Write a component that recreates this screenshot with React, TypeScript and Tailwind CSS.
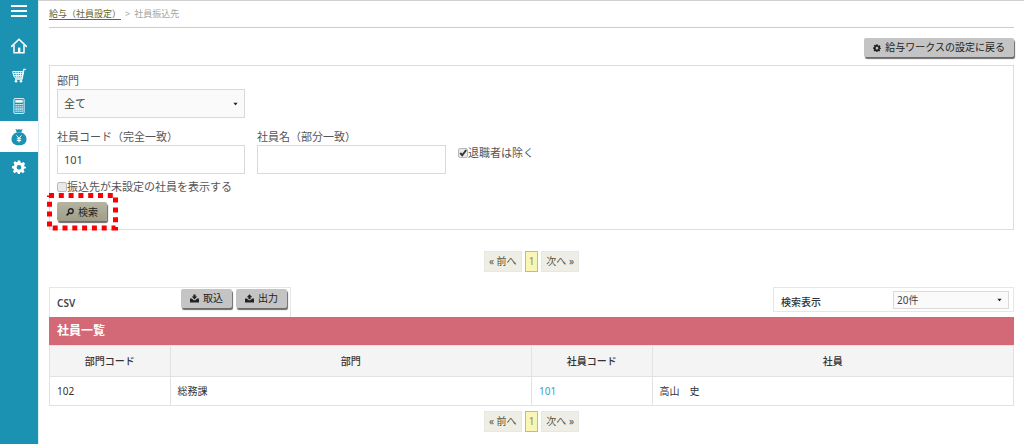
import { useState, type ReactNode } from 'react';

const NAV_LABELS = ['ホーム', '購買', '経理', '給与', '設定'] as const;

const BUTTON_SHADOW = 'shadow-[1px_2px_1px_#6b6b6b]';

function GearIcon({ className }: { className: string }) {
  return (
    <svg viewBox="0 0 24 24" className={className} fill="currentColor" fillRule="evenodd" aria-hidden="true">
      <path d="M10 1h4l.7 3.3 2 .9 2.9-1.8 2.9 2.9-1.8 2.9.9 2L24 12v2l-3.3.8-.9 2 1.8 2.9-2.8 2.8-2.9-1.8-2 .9L13.2 25h-3l-.8-3.4-2-.9-2.9 1.8-2.8-2.8 1.8-2.9-.9-2L0 14v-3.5l3.3-.8.9-2L2.4 4.8l2.8-2.8 2.9 1.8 1.3-.5zM12 8.5a4 4 0 1 0 0 8 4 4 0 0 0 0-8z" />
    </svg>
  );
}

function HomeIcon() {
  return (
    <svg viewBox="0 0 16 16" className="size-4" fill="none" stroke="currentColor" strokeWidth="1.5" aria-hidden="true">
      <path d="M.6 8.4 8 1.2l7.4 7.2" strokeLinecap="round" />
      <path d="M3 7v7.7h10V7" />
      <path d="M7 9.6h2.4v5H7z" fill="currentColor" stroke="none" />
    </svg>
  );
}

function CartIcon() {
  return (
    <svg viewBox="0 0 16 16" className="size-4" fill="none" stroke="currentColor" aria-hidden="true">
      <path d="M14.8 1.3h-1.9L11 11H4" strokeWidth="1.3" />
      <path d="M1.6 3.6h10.6l-.9 5.6H3.3z" strokeWidth="1" />
      <path d="M1.9 5.5h10M2.6 7.4h9M4.7 3.6l.8 5.6M7.2 3.6v5.6M9.8 3.6l-.6 5.6" strokeWidth=".9" />
      <circle cx="5" cy="13.3" r="1.3" fill="currentColor" stroke="none" />
      <circle cx="10" cy="13.3" r="1.3" fill="currentColor" stroke="none" />
    </svg>
  );
}

function CalculatorIcon() {
  return (
    <svg viewBox="0 0 16 16" className="size-4" fill="none" stroke="currentColor" aria-hidden="true">
      <rect x="2.9" y=".6" width="10.2" height="14.8" rx=".8" strokeWidth=".9" />
      <rect x="4.3" y="2.2" width="7.4" height="2.4" fill="currentColor" stroke="none" />
      <path d="M4.4 6.6h7.4M4.4 8.8h7.4M4.4 11h7.4M4.4 13.2h7.4" strokeWidth="1.3" strokeDasharray="1.4 .6" />
    </svg>
  );
}

function MoneyBagIcon() {
  return (
    <svg viewBox="0 0 16 18" className="h-[18px] w-4" aria-hidden="true">
      <path d="M4.4.9 6.6 1.7 8 .9l1.4.8 2.2-.8-1.4 3.5H5.8z" fill="#1c92b3" />
      <path d="M5.4 4.6h5.2c2.8 1 4.9 3.4 4.9 6.4 0 4-2.7 6.3-7.5 6.3S.5 15 .5 11c0-3 2.1-5.4 4.9-6.4z" fill="#1c92b3" />
      <path d="M5.6 7.4 8 10.4l2.4-3M8 10.4v4M5.8 10.8h4.4M5.8 12.6h4.4" fill="none" stroke="#ffffff" strokeWidth="1" />
    </svg>
  );
}

function SearchIcon() {
  return (
    <svg viewBox="0 0 10 10" className="size-2" fill="none" stroke="currentColor" aria-hidden="true">
      <circle cx="6" cy="3.9" r="3" strokeWidth="1.7" />
      <path d="M3.8 6.2.8 9.3" strokeWidth="2.2" />
    </svg>
  );
}

function TrayIcon({ up = false }: { up?: boolean }) {
  return (
    <svg viewBox="0 0 10 10" className="size-[9px]" fill="currentColor" aria-hidden="true">
      <path d="M0 5h2l2.2 2h1.6L8 5h2v4.4H0z" />
      <path d={up ? 'M5 .3 8 3.6H6.2v2.2H3.8V3.6H2z' : 'M3.8.5h2.4v2.3H8L5 6.2 2 2.8h1.8z'} />
    </svg>
  );
}

function ActionButton({ icon, children }: { icon: ReactNode; children: ReactNode }) {
  return (
    <button
      type="button"
      className={`flex h-[19px] items-center gap-1 rounded-[2px] bg-[#c4c4c4] px-[9px] text-[10px] text-[#222222] ${BUTTON_SHADOW}`}
    >
      {icon}
      {children}
    </button>
  );
}

function Caret() {
  return (
    <svg viewBox="0 0 6 4" className="pointer-events-none absolute top-1/2 right-[7px] h-[3px] w-[5px] -translate-y-1/2" aria-hidden="true">
      <path d="M0 0h6L3 4z" fill="#222222" />
    </svg>
  );
}

function Checkbox({ label, initial = false }: { label: string; initial?: boolean }) {
  const [checked, setChecked] = useState(initial);
  return (
    <label className="flex items-center">
      <span className="relative flex size-[10px]">
        <input
          type="checkbox"
          checked={checked}
          onChange={(event) => setChecked(event.target.checked)}
          className="size-[10px] appearance-none rounded-[2px] border border-[#b9b9b9] bg-[#e9e9e9]"
        />
        {checked && (
          <svg viewBox="0 0 9 9" className="pointer-events-none absolute inset-0 size-[10px]" aria-hidden="true">
            <path d="m2 4.5 1.8 2L7.4 1.8" fill="none" stroke="#333333" strokeWidth="1.7" />
          </svg>
        )}
      </span>
      {label}
    </label>
  );
}

function Pager({ label }: { label: string }) {
  const side = 'flex h-[21px] items-center border border-[#e8e8e0] bg-[#efeee6] px-1 text-[#55553f]';
  return (
    <nav aria-label={label} className="flex justify-center gap-[3px] text-[10px]">
      <a href="#prev" className={side}>« 前へ</a>
      <a
        href="#page-1"
        aria-current="page"
        className="flex h-[21px] items-center border border-[#b9b9a8] bg-[#faf5b4] px-[3px] text-[#8a8a60]"
      >
        1
      </a>
      <a href="#next" className={side}>次へ »</a>
    </nav>
  );
}

function Sidebar() {
  const icons = [<HomeIcon />, <CartIcon />, <CalculatorIcon />, <MoneyBagIcon />, <GearIcon className="size-[14px]" />];
  return (
    <aside className="flex w-[38px] shrink-0 flex-col bg-[#1c92b3] text-white">
      <button type="button" aria-label="メニュー" className="flex h-[31px] flex-col items-center gap-[3px] pt-[5px]">
        <span className="h-0.5 w-4 bg-white" />
        <span className="h-0.5 w-4 bg-white" />
        <span className="h-0.5 w-4 bg-white" />
      </button>
      <nav className="flex flex-col">
        {NAV_LABELS.map((label, i) => (
          <a
            key={label}
            href="#menu"
            aria-label={label}
            className={`flex items-center justify-center ${i === 3 ? 'h-[31px] bg-white' : 'h-[30px]'}`}
          >
            {icons[i]}
          </a>
        ))}
      </nav>
    </aside>
  );
}

function SearchForm() {
  const [code, setCode] = useState('101');
  const [name, setName] = useState('');
  const field = 'h-[29px] w-full border border-[#d9d9d9] px-1.5 text-[11px] text-[#444444]';
  return (
    <form className="border border-[#dddddd] px-[7px] py-[7px] text-[11px] leading-4 text-[#555555]">
      <label htmlFor="department" className="block">部門</label>
      <div className="relative w-[188px]">
        <select id="department" className={`${field} appearance-none bg-[#fafafa]`}>
          <option>全て</option>
        </select>
        <Caret />
      </div>

      <div className="mt-[11px] flex gap-3">
        <div className="w-[188px]">
          <label htmlFor="code" className="block">社員コード（完全一致）</label>
          <input id="code" value={code} onChange={(event) => setCode(event.target.value)} className={field} />
        </div>
        <div className="w-[189px]">
          <label htmlFor="name" className="block">社員名（部分一致）</label>
          <input id="name" value={name} onChange={(event) => setName(event.target.value)} className={field} />
        </div>
        <div className="pt-4">
          <Checkbox label="退職者は除く" initial />
        </div>
      </div>

      <div className="mt-[5px]">
        <Checkbox label="振込先が未設定の社員を表示する" />
      </div>

      <div className="relative mt-[7px] mb-px w-fit">
        <button
          type="button"
          className={`flex h-[19px] items-center gap-1 rounded-[2px] bg-linear-to-b from-[#b5b4a2] to-[#9f9e88] px-[9px] text-[10px] text-[#222222] ${BUTTON_SHADOW}`}
        >
          <SearchIcon />
          検索
        </button>
        <svg
          className="pointer-events-none absolute -top-[9px] -left-[10px] h-[38px] w-[71px]"
          viewBox="0 0 71 38"
          fill="none"
          stroke="#fb0007"
          strokeWidth="5"
          aria-hidden="true"
        >
          <path d="M2 2.5h66.5v32.5H2.5V2.5" strokeDasharray="5 4.8" />
        </svg>
      </div>
    </form>
  );
}

function Toolbar() {
  return (
    <div className="flex items-start justify-between">
      <div className="flex h-[30px] w-[242px] items-start justify-between border border-b-0 border-[#e6e6e6] pt-px pr-[3px] pl-[7px]">
        <span className="pt-1.5 text-[10px] leading-4 font-semibold text-[#444444]">CSV</span>
        <div className="flex gap-1">
          <ActionButton icon={<TrayIcon />}>取込</ActionButton>
          <ActionButton icon={<TrayIcon up />}>出力</ActionButton>
        </div>
      </div>
      <div className="flex h-[25px] w-[241px] items-center justify-between border border-[#e6e6e6] pr-1 pl-[7px]">
        <label htmlFor="count" className="pt-1 text-[10px] leading-4 font-medium text-[#333333]">検索表示</label>
        <div className="relative w-[116px]">
          <select
            id="count"
            className="block h-[18px] w-full appearance-none border border-[#d9d9d9] bg-[#fafafa] px-[3px] text-[10px] leading-4 text-[#444444]"
          >
            <option>20件</option>
          </select>
          <Caret />
        </div>
      </div>
    </div>
  );
}

function EmployeeTable() {
  const cell = 'border border-[#e2e2e2] px-[7px]';
  return (
    <table className="w-full table-fixed border-collapse text-left text-[10px] text-[#333333]">
      <caption className="h-7 bg-[#d36877] pl-2 text-left text-[12px] leading-7 font-bold text-white">社員一覧</caption>
      <colgroup>
        <col className="w-1/8" />
        <col className="w-3/8" />
        <col className="w-1/8" />
        <col className="w-3/8" />
      </colgroup>
      <thead>
        <tr className="h-[31px] bg-[#f4f4f4] text-center">
          {['部門コード', '部門', '社員コード', '社員'].map((heading) => (
            <th key={heading} scope="col" className={`${cell} font-medium`}>{heading}</th>
          ))}
        </tr>
      </thead>
      <tbody>
        <tr className="h-[29px]">
          <td className={cell}>102</td>
          <td className={cell}>総務課</td>
          <td className={cell}>
            <a href="#employee-101" className="text-[#3d9cc0]">101</a>
          </td>
          <td className={cell}>高山　史</td>
        </tr>
      </tbody>
    </table>
  );
}

export default function App() {
  return (
    <div lang="ja" className="flex min-h-screen bg-white font-['Noto_Sans','Noto_Sans_CJK_JP',sans-serif]">
      <Sidebar />
      <main className="min-w-0 flex-1 border-t border-l border-t-[#d0d0d0] border-l-[#d9edf3] px-2.5">
        <nav aria-label="パンくず" className="flex h-[27px] items-center gap-1 border-b border-[#cccccc] text-[9px] text-[#a5a5a5]">
          <a href="#payroll" className="text-[#66662c] underline underline-offset-2">給与（社員設定）</a>
          <span>&gt;</span>
          <span>社員振込先</span>
        </nav>
        <div className="flex justify-end pt-2.5 pb-2">
          <ActionButton icon={<GearIcon className="size-2" />}>給与ワークスの設定に戻る</ActionButton>
        </div>
        <SearchForm />
        <div className="pt-[21px] pb-[15px]">
          <Pager label="ページ送り（上）" />
        </div>
        <Toolbar />
        <EmployeeTable />
        <div className="pt-[5px]">
          <Pager label="ページ送り（下）" />
        </div>
      </main>
    </div>
  );
}
